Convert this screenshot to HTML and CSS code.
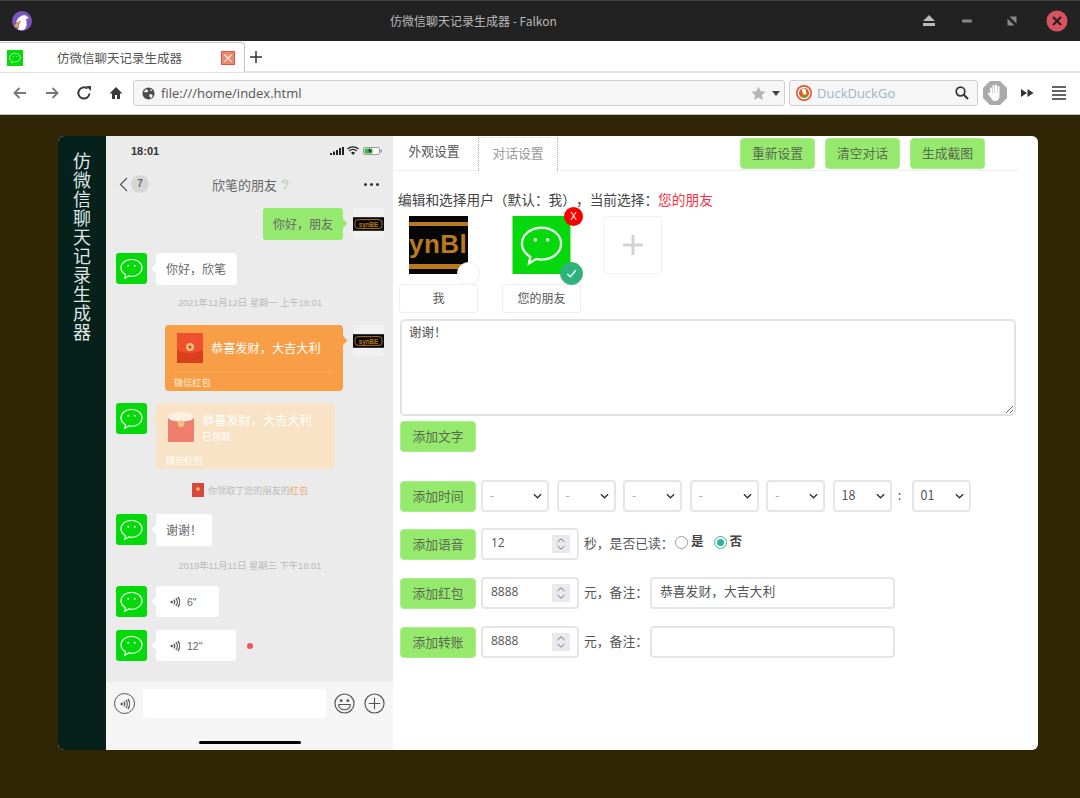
FILE: index.html
```html
<!DOCTYPE html>
<html lang="zh-CN">
<head>
    <meta charset="UTF-8">
    <meta name="viewport" content="width=device-width, initial-scale=1.0">
    <title>仿微信聊天记录生成器</title>
    <link rel="stylesheet" href="styles.css">
</head>
<body>
    <svg class="defs" width="0" height="0">
        <symbol id="wechat" viewBox="0 0 32 32">
            <rect width="32" height="32" fill="#05d80b"/>
            <path d="M16 6.500c-6 0-10.800 3.900-10.800 8.800 0 3 1.900 5.600 4.600 7.200l-.7 3.600 4-2.400c1 .3 1.900.4 2.900.4 6 0 10.800-3.900 10.800-8.800S22 6.500 16 6.500z" fill="none" stroke="#e6fbe6" stroke-width="1.300"/>
            <circle cx="12.600" cy="13.200" r="1" fill="#e6fbe6"/>
            <circle cx="19.400" cy="13.200" r="1" fill="#e6fbe6"/>
        </symbol>
        <symbol id="synbe" viewBox="0 0 32 14">
            <rect width="32" height="14" fill="#050505"/>
            <rect x="2" y="2.500" width="28" height="9" rx="3" fill="none" stroke="#b87a1d" stroke-width="1"/>
            <text x="16" y="9.600" text-anchor="middle" font-size="6.500" font-weight="700" font-family="Liberation Sans" fill="#b87a1d">synBE</text>
        </symbol>
        <symbol id="voice" viewBox="0 0 12 14">
            <circle cx="2" cy="7" r="1.500" fill="#555"/>
            <path d="M4.500 4.300a4 4 0 0 1 0 5.400M7 2.400a7 7 0 0 1 0 9.200M9.400 1a9.500 9.500 0 0 1 0 12" fill="none" stroke="#555" stroke-width="1.500"/>
        </symbol>
        <symbol id="spin" viewBox="0 0 18 18">
            <rect width="18" height="18" fill="#e9e9ee"/>
            <path d="M5.500 7 9 3.800 12.500 7M5.500 11 9 14.200 12.500 11" fill="none" stroke="#777" stroke-width="1"/>
        </symbol>
        <symbol id="chev" viewBox="0 0 10 6">
            <path d="M1 1l4 4 4-4" fill="none" stroke="#333" stroke-width="1.500"/>
        </symbol>
    </svg>

    <header class="titlebar">
        <div class="win-left">
            <svg class="falkon" viewBox="0 0 20 20">
                <circle cx="10" cy="10" r="10" fill="#7a55c0"/>
                <path d="M4 12C5 7 9 4 13 4l4 3-3 1c1 4 1 7-1 10-2 1.500-5 1.500-7 .5C7 15 7 12 9 10c-2 .5-4 1-5 2z" fill="#fff"/>
                <path d="M2 15c2-2.500 4-4 7-5-2 2-3 4-3 6.500-1.500 0-3-.5-4-1.500z" fill="#f2a33a"/>
            </svg>
        </div>
        <span class="win-title">仿微信聊天记录生成器 - Falkon</span>
        <div class="win-btns">
            <svg class="win-btn" viewBox="0 0 22 22"><path d="M11 5l6 6H5zM5 13h12v3H5z" fill="#bbb"/></svg>
            <svg class="win-btn" viewBox="0 0 22 22"><rect x="6" y="9.500" width="10" height="3" rx="1" fill="#888"/></svg>
            <svg class="win-btn" viewBox="0 0 22 22"><path d="M8.500 6.500h7v7zM6.500 8.500l7 7h-7z" fill="#888"/></svg>
            <svg class="win-btn" viewBox="0 0 22 22"><circle cx="11" cy="11" r="10.500" fill="#d9535f"/><path d="M7 7l8 8M15 7l-8 8" stroke="#222" stroke-width="2.200"/></svg>
        </div>
    </header>

    <div class="tabbar">
        <div class="tab">
            <svg class="favicon"><use href="#wechat"/></svg>
            <span class="tab-title">仿微信聊天记录生成器</span>
            <span class="tab-close">×</span>
        </div>
        <svg class="tab-new" viewBox="0 0 16 16"><path d="M8 2v12M2 8h12" stroke="#333" stroke-width="1.500"/></svg>
    </div>

    <nav class="navbar">
        <span class="nav-btn"><svg viewBox="0 0 16 16"><path d="M14 8H3M7.500 3 2.500 8l5 5" fill="none" stroke="#777" stroke-width="1.800"/></svg></span>
        <span class="nav-btn"><svg viewBox="0 0 16 16"><path d="M2 8h11M8.500 3l5 5-5 5" fill="none" stroke="#777" stroke-width="1.800"/></svg></span>
        <span class="nav-btn"><svg viewBox="0 0 16 16"><path d="M13.500 8.500A5.600 5.600 0 1 1 11.500 3.600" fill="none" stroke="#3a3a3a" stroke-width="2"/><path d="M10 1h5v5z" fill="#3a3a3a"/></svg></span>
        <span class="nav-btn"><svg viewBox="0 0 16 16"><path d="M8 2 1.500 8.500H4V14h3v-4h2v4h3V8.500h2.500z" fill="#3a3a3a"/></svg></span>
        <div class="urlbar">
            <svg class="globe" viewBox="0 0 14 14"><circle cx="7" cy="7" r="6.500" fill="#4a4a4a"/><path d="M4 2.500c2 .5 3 1 2.500 2.500L4.500 6 2 5.500M8 7.500l3 .5.500 2-2 2-1.500-2zM9 2l2 2-2 .5z" fill="#f5f5f5"/></svg>
            <span class="url-text">file:///home/index.html</span>
            <svg class="star" viewBox="0 0 16 16"><path d="M8 .5l2.300 5 5.200.6-3.900 3.600 1.100 5.300L8 12.300 3.300 15l1.100-5.300L.5 6.100l5.200-.6z" fill="#b5b5b5"/></svg>
            <svg class="caret" viewBox="0 0 8 5"><path d="M0 0h8L4 5z" fill="#444"/></svg>
        </div>
        <div class="searchbar">
            <svg class="ddg" viewBox="0 0 16 16">
                <circle cx="8" cy="8" r="8" fill="#de5833"/>
                <circle cx="8" cy="8" r="6.300" fill="#fff"/>
                <circle cx="8" cy="8" r="5" fill="#de5833"/>
                <path d="M5.500 4c3.500-1.500 5 1 4.500 3l.5 2H7z" fill="#fff"/>
                <path d="M7 8.500h4.500L10 10H7z" fill="#f2c21a"/>
                <path d="M7 10.500h3l.5 2.500H7z" fill="#5cb02c"/>
            </svg>
            <span class="search-text">DuckDuckGo</span>
            <svg class="magnifier" viewBox="0 0 14 14"><circle cx="5.500" cy="5.500" r="4.300" fill="none" stroke="#333" stroke-width="1.700"/><path d="M8.800 8.800 13 13" stroke="#333" stroke-width="2"/></svg>
        </div>
        <span class="nav-btn nav-hand"><svg viewBox="0 0 24 24"><path d="M7 0h10l7 7v10l-7 7H7l-7-7V7z" fill="#aaa"/><path d="M7 13V7.500a1 1 0 0 1 2 0V12h.5V5a1 1 0 0 1 2 0v7h.5V4.500a1 1 0 0 1 2 0V12h.5V6a1 1 0 0 1 2 0v9c0 3-2 5-4.500 5H12c-2 0-3-1-4-3l-3-4c-.5-1 1-2 2-.5z" fill="#fff"/></svg></span>
        <span class="nav-btn"><svg viewBox="0 0 16 16"><path d="M2 4l6 4-6 4zM8.500 4l6 4-6 4z" fill="#333"/></svg></span>
        <span class="nav-btn"><svg viewBox="0 0 16 16"><path d="M1 2h14M1 6h14M1 10h14M1 14h14" stroke="#333" stroke-width="1.700"/></svg></span>
    </nav>

    <main class="content">
        <div class="card">
            <aside class="sidebar">
                <h1 class="side-title">仿微信聊天记录生成器</h1>
            </aside>

            <section class="phone">
                <div class="statusbar">
                    <span class="clock">18:01</span>
                    <div class="status-icons">
                        <svg class="signal" viewBox="0 0 14 8"><path d="M0 6h2v2H0zM3 4.500h2V8H3zM6 3h2v5H6zM9 1h2v7H9zM12 0h2v8h-2z" fill="#222"/></svg>
                        <svg class="wifi" viewBox="0 0 12 9"><path d="M.5 3a8 8 0 0 1 11 0M2.300 5a5.200 5.200 0 0 1 7.400 0" fill="none" stroke="#222" stroke-width="1.300"/><path d="M4 6.700a3 3 0 0 1 4 0L6 9z" fill="#222"/></svg>
                        <svg class="battery" viewBox="0 0 19 8"><rect x=".5" y=".5" width="16" height="7" rx="1.500" fill="#fff" stroke="#999"/><rect x="1.500" y="1.500" width="8" height="5" fill="#3db54a"/><path d="M7 1 5 4.300h2L6 7l3-3.500H7z" fill="#222"/><rect x="17.500" y="2.500" width="1.500" height="3" fill="#999"/></svg>
                    </div>
                </div>
                <div class="chat-head">
                    <svg class="back" viewBox="0 0 9 15"><path d="M8 1 1.500 7.500 8 14" fill="none" stroke="#555" stroke-width="1.200"/></svg>
                    <span class="badge">7</span>
                    <span class="chat-name">欣笔的朋友</span>
                    <svg class="ear" viewBox="0 0 8 11"><path d="M1 4a3 3 0 0 1 6 0c0 2-2 2-2 4s-2 2.500-3 1M3 4.500a1 1 0 0 1 2 0" fill="none" stroke="#bbb" stroke-width="1"/></svg>
                    <span class="more"><i></i><i></i><i></i></span>
                </div>

                <div class="msgs">
                    <div class="msg msg-me">
                        <div class="bubble bubble-green">你好，朋友</div>
                        <span class="ava ava-me"><svg><use href="#synbe"/></svg></span>
                    </div>
                    <div class="msg msg-gap msg-hello">
                        <svg class="ava"><use href="#wechat"/></svg>
                        <div class="bubble bubble-white bubble-hello">你好，欣笔</div>
                    </div>
                    <div class="stamp stamp-a">2021年12月12日 星期一 上午18:01</div>
                    <div class="msg msg-me">
                        <div class="packet packet-send">
                            <div class="packet-main">
                                <svg class="packet-ico" viewBox="0 0 26 30"><rect width="26" height="30" fill="#d93f1b"/><path d="M0 0h26v17c-8 4-18 4-26 0z" fill="#ef5030"/><circle cx="13" cy="14" r="4" fill="#f2c078"/><circle cx="13" cy="14" r="1.500" fill="#d93f1b"/></svg>
                                <span class="packet-text">恭喜发财，大吉大利</span>
                            </div>
                            <div class="packet-foot">微信红包</div>
                        </div>
                        <span class="ava ava-me"><svg><use href="#synbe"/></svg></span>
                    </div>
                    <div class="msg msg-gap">
                        <svg class="ava"><use href="#wechat"/></svg>
                        <div class="packet packet-got">
                            <div class="packet-main">
                                <svg class="packet-ico" viewBox="0 0 27 31"><rect y="6" width="27" height="25" fill="#ef7f6c"/><ellipse cx="13.500" cy="5" rx="13.500" ry="5" fill="#fdf1e4"/><circle cx="13.500" cy="12" r="3.500" fill="#f2c078"/></svg>
                                <div class="packet-lines">
                                    <span class="packet-text">恭喜发财，大吉大利</span>
                                    <span class="packet-sub">已领取</span>
                                </div>
                            </div>
                            <div class="packet-foot">微信红包</div>
                        </div>
                    </div>
                    <div class="notice">
                        <svg class="notice-ico" viewBox="0 0 12 14"><rect width="12" height="14" fill="#d9483c"/><circle cx="6" cy="6" r="1.800" fill="#f2c078"/></svg>
                        <span>你领取了您的朋友的<em>红包</em></span>
                    </div>
                    <div class="msg">
                        <svg class="ava"><use href="#wechat"/></svg>
                        <div class="bubble bubble-white">谢谢！</div>
                    </div>
                    <div class="stamp stamp-b">2019年11月11日 星期三 下午18:01</div>
                    <div class="msg msg-gap">
                        <svg class="ava"><use href="#wechat"/></svg>
                        <div class="bubble bubble-white bubble-voice bubble-voice-s"><svg class="voice"><use href="#voice"/></svg>6"</div>
                    </div>
                    <div class="msg msg-voice2">
                        <svg class="ava"><use href="#wechat"/></svg>
                        <div class="bubble bubble-white bubble-voice bubble-voice-l"><svg class="voice"><use href="#voice"/></svg>12"</div>
                        <span class="unread"></span>
                    </div>
                </div>

                <div class="phone-foot">
                    <div class="inputbar">
                        <span class="round"><svg class="voice"><use href="#voice"/></svg></span>
                        <span class="fake-input"></span>
                        <svg class="round-ico" viewBox="0 0 22 22"><circle cx="11" cy="11" r="10" fill="none" stroke="#555" stroke-width="1.200"/><circle cx="7.500" cy="8" r="1.500" fill="#555"/><circle cx="14.500" cy="8" r="1.500" fill="#555"/><path d="M5 12h12c0 3.500-2.500 5.500-6 5.500S5 15.500 5 12z" fill="none" stroke="#555" stroke-width="1.200"/></svg>
                        <svg class="round-ico" viewBox="0 0 22 22"><circle cx="11" cy="11" r="10" fill="none" stroke="#555" stroke-width="1.200"/><path d="M11 5v12M5 11h12" stroke="#555" stroke-width="1.200"/></svg>
                    </div>
                    <span class="homebar"></span>
                </div>
            </section>

            <section class="settings">
                <div class="tabs-row">
                    <span class="set-tab">外观设置</span>
                    <span class="set-tab set-tab-on">对话设置</span>
                    <div class="actions">
                        <button class="btn">重新设置</button>
                        <button class="btn">清空对话</button>
                        <button class="btn">生成截图</button>
                    </div>
                </div>

                <p class="pick-line">编辑和选择用户（默认：我），当前选择：<span class="pick-now">您的朋友</span></p>

                <div class="users">
                    <div class="user">
                        <div class="user-pic">
                            <div class="logo-big"><span class="logo-word">ynBl</span></div>
                            <span class="tick"></span>
                        </div>
                        <div class="user-name">我</div>
                    </div>
                    <div class="user">
                        <div class="user-pic">
                            <svg class="pic-svg"><use href="#wechat"/></svg>
                            <span class="del">X</span>
                            <span class="tick tick-on"><svg viewBox="0 0 14 14"><path d="M3 7.500 6 10l5-6" fill="none" stroke="#dff" stroke-width="1.400"/></svg></span>
                        </div>
                        <div class="user-name">您的朋友</div>
                    </div>
                    <div class="add-user"><svg viewBox="0 0 20 20"><path d="M10 0v20M0 10h20" stroke="#d2d2d2" stroke-width="3"/></svg></div>
                </div>

                <textarea class="text-box">谢谢！</textarea>
                <button class="btn btn-text">添加文字</button>

                <div class="row row-time">
                    <button class="btn">添加时间</button>
                    <div class="sel sel-68"><span>-</span><svg><use href="#chev"/></svg></div>
                    <div class="sel sel-59"><span>-</span><svg><use href="#chev"/></svg></div>
                    <div class="sel sel-59"><span>-</span><svg><use href="#chev"/></svg></div>
                    <div class="sel sel-69"><span>-</span><svg><use href="#chev"/></svg></div>
                    <div class="sel sel-59"><span>-</span><svg><use href="#chev"/></svg></div>
                    <div class="sel sel-59 sel-val"><span>18</span><svg><use href="#chev"/></svg></div>
                    <span class="colon">:</span>
                    <div class="sel sel-59 sel-val"><span>01</span><svg><use href="#chev"/></svg></div>
                </div>
                <div class="row row-voice">
                    <button class="btn">添加语音</button>
                    <div class="num"><span>12</span><svg><use href="#spin"/></svg></div>
                    <span class="row-text">秒，是否已读：</span>
                    <span class="radio"></span><b class="radio-label">是</b>
                    <span class="radio radio-on"></span><b class="radio-label">否</b>
                </div>
                <div class="row">
                    <button class="btn">添加红包</button>
                    <div class="num"><span>8888</span><svg><use href="#spin"/></svg></div>
                    <span class="row-text row-text-note">元，备注：</span>
                    <input class="note" type="text" value="恭喜发财，大吉大利">
                </div>
                <div class="row">
                    <button class="btn">添加转账</button>
                    <div class="num"><span>8888</span><svg><use href="#spin"/></svg></div>
                    <span class="row-text row-text-note">元，备注：</span>
                    <input class="note" type="text">
                </div>
            </section>
        </div>
    </main>
</body>
</html>
```

FILE: styles.css
```css
* {
    box-sizing: border-box;
}
html, body {
    margin: 0;
    padding: 0;
}
body {
    width: 1080px;
    height: 798px;
    overflow: hidden;
    display: flex;
    flex-direction: column;
    font-family: "Noto Sans CJK SC", "Noto Sans", sans-serif;
    text-spacing-trim: space-all;
    background: #302505;
    color: #444;
}
.defs {
    display: none;
}

/* window title */
.titlebar {
    height: 41px;
    padding-bottom: 1px;
    display: flex;
    align-items: center;
    background: #222;
    border-top: 1px solid #444;
    color: #b9b9b9;
    font-size: 12px;
}
.win-left {
    width: 390px;
    padding-left: 12px;
    display: flex;
}
.falkon {
    width: 20px;
    height: 20px;
}
.win-btns {
    margin-left: auto;
    padding-right: 12px;
    display: flex;
}
.win-btn {
    width: 22px;
    height: 22px;
    margin-left: 23px;
}
.win-btn:first-child {
    margin-left: 0;
}
.win-btn:nth-child(2) {
    margin-left: 16px;
}

/* tabs */
.tabbar {
    height: 32px;
    display: flex;
    align-items: flex-end;
    background: #fff;
    border-bottom: 2px solid #e2e2e2;
}
.tab {
    width: 245px;
    height: 30px;
    margin-bottom: -1px;
    padding: 0 9px 0 7px;
    display: flex;
    align-items: center;
    background: #fff;
    border: 1px solid #c4c4c4;
    border-left: 0;
    border-bottom: 0;
    border-radius: 0 4px 0 0;
    font-size: 12.500px;
    color: #555;
}
.favicon {
    width: 16px;
    height: 16px;
}
.tab-title {
    margin-left: 34px;
}
.tab-close {
    margin-left: auto;
    width: 14px;
    height: 14px;
    background: #ec8a6c;
    border: 1px solid #d9534f;
    color: #fff;
    font-size: 12px;
    line-height: 11px;
    text-align: center;
}
.tab-new {
    width: 16px;
    height: 16px;
    margin: 0 0 6px 3px;
}

/* toolbar */
.navbar {
    height: 42px;
    padding: 0 0 1px 4px;
    display: flex;
    align-items: center;
    background: #fff;
    border-bottom: 1px solid #bdbdbd;
}
.nav-btn {
    width: 32px;
    display: flex;
    justify-content: center;
}
.nav-btn svg {
    width: 16px;
    height: 16px;
}
.nav-hand {
    margin-left: 1px;
}
.nav-hand svg {
    width: 24px;
    height: 24px;
}
.urlbar, .searchbar {
    height: 26px;
    display: flex;
    align-items: center;
    background: #f6f6f6;
    border: 1px solid #cfcfcf;
    border-radius: 3px;
    font-family: "Open Sans", sans-serif;
    font-size: 13px;
}
.urlbar {
    width: 652px;
    margin-left: 1px;
    padding: 0 4px 0 8px;
    color: #555;
}
.globe {
    width: 13px;
    height: 13px;
}
.url-text {
    margin-left: 6px;
}
.star {
    width: 15px;
    height: 15px;
    margin-left: auto;
}
.caret {
    width: 8px;
    height: 5px;
    margin-left: 6px;
}
.searchbar {
    width: 189px;
    margin-left: 4px;
    padding: 0 8px 0 6px;
    color: #9db3c4;
}
.ddg {
    width: 16px;
    height: 16px;
}
.search-text {
    margin-left: 5px;
}
.magnifier {
    width: 14px;
    height: 14px;
    margin-left: auto;
}

/* app card */
.content {
    flex: 1;
    padding: 21px 42px 48px 58px;
}
.card {
    width: 980px;
    height: 614px;
    display: flex;
    overflow: hidden;
    background: #fff;
    border-radius: 6px;
}
.sidebar {
    width: 48px;
    padding-top: 16px;
    display: flex;
    justify-content: center;
    background: #06201b;
}
.side-title {
    margin: 0;
    height: 200px;
    writing-mode: vertical-rl;
    font-size: 18px;
    font-weight: 400;
    letter-spacing: 1px;
    color: #dfe6e4;
}

/* phone preview */
.phone {
    width: 287px;
    display: flex;
    flex-direction: column;
    background: #ebebeb;
}
.statusbar {
    height: 29px;
    padding: 0 11px 0 25px;
    display: flex;
    align-items: center;
    justify-content: space-between;
}
.clock {
    font-family: "Liberation Sans", sans-serif;
    font-size: 11px;
    font-weight: 700;
    color: #333;
}
.status-icons {
    display: flex;
    align-items: center;
    gap: 3px;
}
.signal {
    width: 14px;
    height: 8px;
}
.wifi {
    width: 12px;
    height: 9px;
}
.battery {
    width: 19px;
    height: 8px;
    margin-left: 1px;
}
.chat-head {
    height: 40px;
    padding: 0 14px 2px 13px;
    display: flex;
    align-items: center;
    font-size: 13px;
    color: #666;
}
.back {
    width: 9px;
    height: 15px;
}
.badge {
    width: 18px;
    height: 18px;
    margin-left: 3px;
    border-radius: 50%;
    background: #d6d6d6;
    font-family: "Liberation Sans", sans-serif;
    font-size: 10px;
    font-weight: 700;
    line-height: 18px;
    text-align: center;
}
.chat-name {
    margin-left: 63px;
}
.ear {
    width: 8px;
    height: 11px;
    margin-left: 4px;
}
.more {
    margin-left: auto;
    display: flex;
    gap: 3px;
}
.more i {
    width: 3px;
    height: 3px;
    border-radius: 50%;
    background: #333;
}
.msgs {
    padding: 3px 9px 0 10px;
    display: flex;
    flex-direction: column;
}
.msg {
    display: flex;
    align-items: flex-start;
    gap: 9px;
}
.msg-me {
    justify-content: flex-end;
    gap: 10px;
}
.msg-gap {
    margin-top: 12px;
}
.msg-hello {
    margin-top: 13px;
}
.msg-voice2 {
    margin-top: 13px;
}
.ava {
    flex: none;
    width: 31px;
    height: 31px;
    border-radius: 3px;
    overflow: hidden;
}
.ava-me {
    height: 31px;
    display: flex;
    align-items: center;
    background: #f1f1f1;
}
.ava-me svg {
    width: 31px;
    height: 14px;
}
.bubble {
    position: relative;
    height: 32px;
    padding: 0 10px;
    border-radius: 3px;
    font-size: 12px;
    line-height: 32px;
    color: #666;
}
.bubble-green {
    background: #95e96f;
}
.bubble-white {
    background: #fff;
}
.bubble-hello {
    width: 81px;
}
.bubble::after, .packet::after {
    content: "";
    position: absolute;
    top: 12px;
    width: 7px;
    height: 7px;
    transform: rotate(45deg);
    background: inherit;
}
.msg-me .bubble::after, .msg-me .packet::after {
    right: -3px;
}
.bubble-white::after, .packet-got::after {
    left: -3px;
}
.stamp {
    text-align: center;
    font-family: "Liberation Sans", "Noto Sans CJK SC", sans-serif;
    font-size: 9.300px;
    line-height: 14px;
    color: #bababa;
}
.stamp-a {
    margin: 11px 0 15px;
}
.stamp-b {
    margin: 13px 0 1px;
}
.packet {
    position: relative;
    width: 178px;
    height: 66px;
    padding: 8px 12px 0;
    border-radius: 4px;
    color: #fff;
    font-size: 12.200px;
}
.packet-send {
    background: #f89e47;
}
.packet-got {
    width: 179px;
    padding-top: 9px;
    background: #f9e3c7;
}
.packet-main {
    height: 39px;
    display: flex;
    gap: 8px;
}
.packet-ico {
    flex: none;
    width: 26px;
    height: 30px;
}
.packet-send .packet-text {
    line-height: 30px;
}
.packet-lines {
    display: flex;
    flex-direction: column;
}
.packet-got .packet-text {
    line-height: 16px;
}
.packet-sub {
    font-size: 9.500px;
    line-height: 17px;
}
.packet-foot {
    font-size: 9.200px;
    line-height: 18px;
    margin-left: -3px;
    color: #fdeedd;
}
.packet-send .packet-foot {
    border-top: 1px solid #fbab5e;
    margin-right: -2px;
}
.packet-got .packet-foot {
    margin-left: -2px;
    color: #fff;
}
.notice {
    margin: 14px 0 17px;
    display: flex;
    align-items: center;
    justify-content: center;
    gap: 4px;
    font-size: 9.100px;
    line-height: 14px;
    color: #bababa;
}
.notice-ico {
    width: 12px;
    height: 14px;
}
.notice em {
    font-style: normal;
    color: #efa76a;
}
.bubble-voice {
    height: 31px;
    display: flex;
    align-items: center;
    padding-left: 14px;
    font-family: "Liberation Sans", sans-serif;
    font-size: 10.500px;
}
.bubble-voice-s {
    width: 63px;
}
.bubble-voice-l {
    width: 80px;
}
.voice {
    width: 10px;
    height: 12px;
    margin-right: 7px;
}
.unread {
    width: 6px;
    height: 6px;
    margin: 13px 0 0 2px;
    border-radius: 50%;
    background: #eb5757;
}
.phone-foot {
    margin-top: auto;
    height: 68px;
    padding: 7px 8px 0;
    display: flex;
    flex-direction: column;
    background: #f5f5f5;
}
.inputbar {
    height: 29px;
    display: flex;
    align-items: center;
}
.round, .round-ico {
    flex: none;
    width: 21px;
    height: 21px;
}
.round {
    display: flex;
    align-items: center;
    justify-content: center;
    border: 1.200px solid #555;
    border-radius: 50%;
}
.round .voice {
    margin: 0;
}
.fake-input {
    width: 183px;
    height: 29px;
    margin: 0 8px;
    border-radius: 3px;
    background: #fff;
}
.round-ico + .round-ico {
    margin-left: 9px;
}
.homebar {
    width: 102px;
    height: 3px;
    margin: 23px auto 0 85px;
    border-radius: 2px;
    background: #000;
}

/* settings */
.settings {
    flex: 1;
    padding-right: 20px;
}
.tabs-row {
    height: 35px;
    display: flex;
    align-items: flex-end;
    border-bottom: 1px solid #eee;
    font-size: 12.800px;
}
.set-tab {
    width: 84px;
    height: 34px;
    padding-right: 2px;
    line-height: 30px;
    text-align: center;
    color: #555;
}
.set-tab-on {
    width: 80px;
    margin-left: 1px;
    margin-bottom: -1px;
    padding-right: 0;
    background: #fff;
    border: 1px dotted #aaa;
    border-bottom: 0;
    border-top-color: #ddd;
    color: #999;
}
.actions {
    margin-left: 182px;
    margin-bottom: 1px;
    display: flex;
    gap: 10px;
}
.actions .btn {
    width: 75px;
}
.btn {
    flex: none;
    width: 76px;
    height: 31px;
    padding: 0 0 3px;
    border: 1px solid #a6ee86;
    border-radius: 4px;
    background: #95ea6e;
    font-family: inherit;
    font-size: 12.800px;
    color: #5a6a50;
}
.pick-line {
    margin: 18px 0 0 5px;
    font-size: 13.700px;
    line-height: 20px;
    color: #444;
}
.pick-now {
    color: #f5313f;
}
.users {
    margin: 7px 0 0 6px;
    display: flex;
}
.user {
    width: 79px;
    margin-right: 24px;
}
.user + .user {
    margin-right: 22px;
}
.user-pic {
    position: relative;
    width: 59px;
    height: 58px;
    margin: 0 auto;
}
.pic-svg {
    display: block;
    width: 59px;
    height: 58px;
}
.logo-big {
    width: 59px;
    height: 58px;
    padding-top: 6px;
    background: #050505;
}
.logo-word {
    display: block;
    height: 47px;
    border-top: 4px solid #b87a1d;
    border-bottom: 5px solid #b87a1d;
    font-family: "Liberation Sans", sans-serif;
    font-size: 26px;
    font-weight: 700;
    line-height: 37px;
    letter-spacing: 0.5px;
    color: #b87a1d;
}
.tick {
    position: absolute;
    left: 48px;
    top: 46px;
    width: 23px;
    height: 23px;
    border: 1px solid #eee;
    border-radius: 50%;
    background: #fff;
}
.tick-on {
    padding: 3px;
    border-color: #2fb37a;
    background: #2fb37a;
}
.tick-on svg {
    display: block;
    width: 15px;
    height: 15px;
}
.del {
    position: absolute;
    left: 52px;
    top: -9px;
    width: 19px;
    height: 19px;
    border-radius: 50%;
    background: #f80000;
    font-family: "Liberation Sans", sans-serif;
    font-size: 10px;
    line-height: 19px;
    text-align: center;
    color: #fff;
}
.user-name {
    height: 29px;
    margin-top: 10px;
    border: 1px solid #f0f0f0;
    border-radius: 3px;
    font-size: 12px;
    line-height: 25px;
    text-align: center;
    color: #555;
}
.add-user {
    width: 59px;
    height: 58px;
    display: flex;
    align-items: center;
    justify-content: center;
    border: 1px dotted #e6e6e6;
    border-radius: 3px;
}
.add-user svg {
    width: 20px;
    height: 20px;
}
.text-box {
    display: block;
    width: 616px;
    height: 97px;
    margin: 6px 0 0 7px;
    padding: 1px 7px;
    border: 2px solid #e2e2e2;
    border-radius: 5px;
    font-family: inherit;
    font-size: 12.500px;
    line-height: 20px;
    color: #555;
}
.btn-text {
    display: block;
    margin: 5px 0 0 7px;
}
.row {
    height: 32px;
    margin: 17px 0 0 7px;
    display: flex;
    align-items: center;
    font-size: 12.800px;
    color: #555;
}
.row-time {
    margin-top: 28px;
}
.row-voice {
    margin-top: 16px;
}
.row .btn {
    margin-top: 1px;
}
.sel {
    height: 32px;
    margin-left: 7.500px;
    padding: 0 5px 4px 7px;
    display: flex;
    align-items: center;
    justify-content: space-between;
    border: 2px solid #e5e5e5;
    border-radius: 4px;
    font-size: 12.500px;
    color: #aaa;
}
.sel svg {
    width: 9px;
    height: 6px;
    margin-top: 4px;
}
.row .btn + .sel {
    margin-left: 5px;
}
.sel-68 {
    width: 68px;
}
.sel-59 {
    width: 59px;
}
.sel-69 {
    width: 69px;
}
.sel-val {
    color: #555;
}
.colon {
    width: 12px;
    margin: 0 6px 4px 2px;
    text-align: center;
}
.colon + .sel {
    margin-left: 0;
}
.num {
    width: 98px;
    height: 32px;
    margin-left: 5px;
    padding: 0 7px 0 8px;
    display: flex;
    align-items: center;
    justify-content: space-between;
    border: 2px solid #e5e5e5;
    border-radius: 4px;
    font-family: "Open Sans", sans-serif;
    font-size: 12px;
}
.num span {
    margin-bottom: 4px;
}
.num svg {
    width: 18px;
    height: 18px;
}
.row-text {
    margin: 0 0 4px 5px;
    width: 91px;
}
.row-text-note {
    width: 66px;
}
.radio {
    width: 13px;
    height: 13px;
    margin-bottom: 4px;
    border: 1.500px solid #9a9aa8;
    border-radius: 50%;
}
.radio-on {
    margin-left: 1px;
    padding: 2px;
    border-color: #2fb39a;
    background: #2fb39a content-box;
}
.radio-label {
    margin: 0 9px 8px 3px;
    font-size: 12.500px;
    color: #444;
}
.note {
    width: 245px;
    height: 32px;
    padding: 0 8px 5px;
    border: 2px solid #e5e5e5;
    border-radius: 4px;
    font-family: inherit;
    font-size: 12.800px;
    color: #555;
}
```
